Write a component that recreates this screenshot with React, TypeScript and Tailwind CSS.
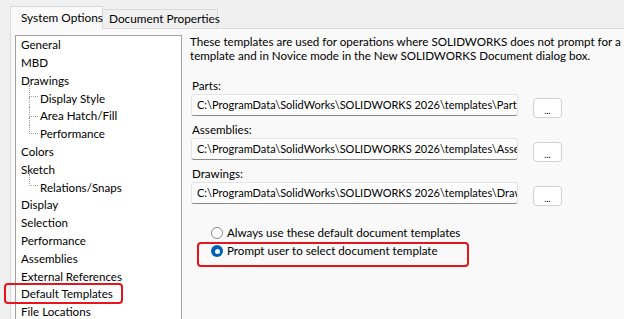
import React from "react";

const FONT = { fontFamily: 'Lato, "Noto Sans", sans-serif' };

type Item = { label: string; child?: boolean; last?: boolean; first?: boolean };

const items: Item[] = [
  { label: "General" },
  { label: "MBD" },
  { label: "Drawings" },
  { label: "Display Style", child: true, first: true },
  { label: "Area Hatch/Fill", child: true },
  { label: "Performance", child: true, last: true },
  { label: "Colors" },
  { label: "Sketch" },
  { label: "Relations/Snaps", child: true, first: true, last: true },
  { label: "Display" },
  { label: "Selection" },
  { label: "Performance" },
  { label: "Assemblies" },
  { label: "External References" },
  { label: "Default Templates" },
  { label: "File Locations" },
];

function TreeRow({ item }: { item: Item }) {
  if (!item.child) {
    return (
      <div className="h-[17.8px] flex items-center pl-[5px] whitespace-nowrap">{item.label}</div>
    );
  }
  return (
    <div className="h-[17.8px] flex items-stretch pl-[13px] whitespace-nowrap">
      <div className="w-[9px] flex flex-col">
        <div className={`flex-1 border-l border-b border-dotted border-[#a0a0a0] ${item.first ? "-mt-[4px]" : ""}`} />
        <div className={`flex-1 ${item.last ? "" : "border-l border-dotted border-[#a0a0a0]"}`} />
      </div>
      <div className="flex items-center pl-[2px]">{item.label}</div>
    </div>
  );
}

function PathField({ label, value }: { label: string; value: string }) {
  return (
    <div className="flex flex-col">
      <div className="h-[14px] leading-[14px] pl-[1px]">{label}</div>
      <div className="flex items-start mt-[1px] h-[22px]">
        <div className="w-[327px] h-[22px] bg-[#fdfdfd] border border-[#e5e5e5] border-b-[#8a8a8a] rounded-[3px] pl-[5px] overflow-hidden text-[11px]">
          <div className="w-[320px] overflow-hidden whitespace-nowrap leading-[20px]">{value}</div>
        </div>
        <div className="ml-[15px] mt-[4px] w-[29px] h-[20px] shrink-0 bg-white border border-[#d0d0d0] rounded-[4px] flex items-center justify-center text-[9px] leading-none pt-[4px]">
          ...
        </div>
      </div>
    </div>
  );
}

export default function App() {
  return (
    <div
      className="w-[624px] h-[319px] bg-[#f0f0f0] overflow-hidden relative text-[#000] text-[11.6px]"
      style={FONT}
    >
      {/* Tabs */}
      <div className="flex items-end pl-[10px] pt-[6px] h-[28px]">
        <div className="w-[93px] h-[23px] bg-[#f9f9f9] border border-b-0 border-[#d9d9d9] flex items-center pl-[10px] text-[11.8px] whitespace-nowrap relative z-10 -mb-px">
          System Options
        </div>
        <div className="w-[115px] h-[19px] bg-[#f0f0f0] border border-b-0 border-l-0 border-[#d9d9d9] flex items-center pl-[6px] text-[11.8px] whitespace-nowrap">
          Document Properties
        </div>
      </div>
      {/* Panel */}
      <div className="ml-[10px] h-[300px] bg-[#f9f9f9] border-l border-t border-[#d9d9d9] flex">
        <div className="ml-[4px] mt-[6px] w-[167px] h-[300px] shrink-0 bg-white border border-[#a0a0a0] text-[11.6px]">
          {items.map((it, i) => (
            <TreeRow key={i} item={it} />
          ))}
        </div>
        <div className="ml-[8px] pt-[6px] flex flex-col">
          <div className="leading-[14px] w-[432px] whitespace-nowrap">
            These templates are used for operations where SOLIDWORKS does not prompt for a
            <br />
            template and in Novice mode in the New SOLIDWORKS Document dialog box.
          </div>
          <div className="mt-[16px] flex flex-col gap-[7px] pl-[1px]">
            <PathField label="Parts:" value="C:\ProgramData\SolidWorks\SOLIDWORKS 2026\templates\Part.prtdot" />
            <PathField label="Assemblies:" value="C:\ProgramData\SolidWorks\SOLIDWORKS 2026\templates\Assembly.asmdot" />
            <PathField label="Drawings:" value="C:\ProgramData\SolidWorks\SOLIDWORKS 2026\templates\Drawing.drwdot" />
          </div>
          <div className="mt-[20px] pl-[21px] flex flex-col">
            <div className="h-[18px] flex items-center">
              <div className="w-[12px] h-[12px] rounded-full border border-[#8a8a8a] bg-white" />
              <span className="ml-[4px]">Always use these default document templates</span>
            </div>
            <div className="h-[18px] flex items-center">
              <div className="w-[12px] h-[12px] rounded-full bg-[#005fb8] flex items-center justify-center">
                <div className="w-[5px] h-[5px] rounded-full bg-white" />
              </div>
              <span className="ml-[4px]">Prompt user to select document template</span>
            </div>
          </div>
        </div>
      </div>
      {/* Annotation highlights */}
      <div className="absolute left-[4px] top-[283px] w-[119px] h-[21px] border-2 border-[#e8141b] rounded-[4px]" />
      <div className="absolute left-[197px] top-[242px] w-[272px] h-[25px] border-2 border-[#e8141b] rounded-[4px]" />
    </div>
  );
}
